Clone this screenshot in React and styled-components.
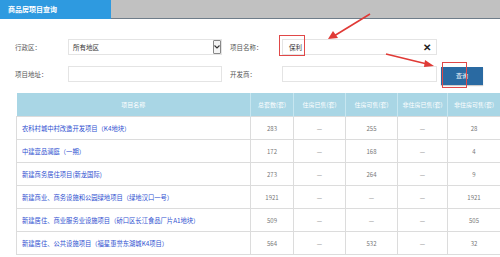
import styled, { createGlobalStyle } from "styled-components";

const rows = [
  ["农科村城中村改造开发项目（K4地块）", "283", "—", "255", "—", "28"],
  ["中建壹品澜庭（一期）", "172", "—", "168", "—", "4"],
  ["新建商务居住项目(新龙国际)", "273", "—", "264", "—", "9"],
  ["新建商业、商务设施和公园绿地项目（绿地汉口一号）", "1921", "—", "—", "—", "1921"],
  ["新建居住、商业服务业设施项目（硚口区长江食品厂片A1地块）", "509", "—", "—", "—", "505"],
  ["新建居住、公共设施项目（福星惠誉东湖城K4项目）", "564", "—", "532", "—", "32"],
];

const heads = ["项目名称", "总套数(套)", "住房已售(套)", "住房可售(套)", "非住房已售(套)", "非住房可售(套)"];
const widths = [234, 43, 52, 52, 50, 53];

function App() {
  return (
    <Page>
      <Global />
      <TopBar>
        <Tab>商品房项目查询</Tab>
      </TopBar>
      <Form>
        <Label>行政区：</Label>
        <Select>
          <span>所有地区</span>
          <Caret>
            <svg width="6" height="4" viewBox="0 0 6 4">
              <path d="M0.5 0.5 L3 3 L5.5 0.5" fill="none" stroke="#333" strokeWidth="1.1" />
            </svg>
          </Caret>
        </Select>
        <Label>项目名称：</Label>
        <Field>
          <span>保利</span>
          <Clear>✕</Clear>
        </Field>
        <span />
        <Label>项目地址：</Label>
        <Field />
        <Label>开发商：</Label>
        <Field />
        <Button>查询</Button>
      </Form>
      <Table>
        <colgroup>
          {widths.map((w, i) => (
            <col key={i} style={{ width: w }} />
          ))}
        </colgroup>
        <thead>
          <tr>
            {heads.map((h) => (
              <Th key={h}>{h}</Th>
            ))}
          </tr>
        </thead>
        <tbody>
          {rows.map((r) => (
            <tr key={r[0]}>
              <NameCell>{r[0]}</NameCell>
              {r.slice(1).map((v, i) => (
                <Td key={i}>{v}</Td>
              ))}
            </tr>
          ))}
        </tbody>
      </Table>
      <Mark $x={279} $y={35} $w={26} $h={21} />
      <Mark $x={442} $y={62} $w={25} $h={26} />
      <Arrows width="500" height="257" viewBox="0 0 500 257">
        <line x1="370" y1="14" x2="334" y2="36" stroke="#e03a36" strokeWidth="1.6" />
        <polygon points="328,39 333,31 338,38" fill="#e03a36" />
        <line x1="386" y1="54" x2="427" y2="64" stroke="#e03a36" strokeWidth="1.6" />
        <polygon points="434,66 425,60 424,67" fill="#e03a36" />
      </Arrows>
    </Page>
  );
}

const Global = createGlobalStyle`
  html, body { margin: 0; padding: 0; background: #fff; overflow: hidden; }
  body { font-family: "Noto Sans CJK SC", "Noto Sans", sans-serif; }
`;

const Page = styled.div`
  position: relative;
  width: 500px;
  height: 257px;
  overflow: hidden;
`;

const TopBar = styled.div`
  display: flex;
  height: 19px;
  background: #c1c1c1;
  box-shadow: inset 0 -1px 0 #6f7d8a;
`;

const Tab = styled.div`
  width: 103px;
  padding-left: 8px;
  background: #2e9ae0;
  color: #fff;
  font-size: 7px;
  font-weight: bold;
  line-height: 19px;
`;

const Form = styled.div`
  display: grid;
  grid-template-columns: 53px 162px 52px 159px 46px;
  grid-template-rows: 16px 16px;
  row-gap: 11px;
  align-items: center;
  padding: 20px 0 0 15px;
  height: 54px;
  box-sizing: border-box;

  & > :nth-child(2),
  & > :nth-child(7) {
    margin-right: 8px;
  }
  & > :nth-child(4),
  & > :nth-child(9) {
    margin-right: 4px;
  }
`;

const Label = styled.div`
  font-size: 6.5px;
  color: #555;
`;

const Field = styled.div`
  display: flex;
  align-items: center;
  justify-content: space-between;
  height: 16px;
  border: 1px solid #e4e4e4;
  box-sizing: border-box;
  padding: 0 5px 0 6px;
  font-size: 6.5px;
  color: #333;
`;

const Select = styled(Field)`
  padding: 0 0 0 4px;
`;

const Caret = styled.div`
  display: flex;
  align-items: center;
  justify-content: center;
  width: 8px;
  height: 14px;
  border: 1px solid #888;
  border-radius: 1px;
  background: #f4f4f4;
  box-sizing: border-box;
`;

const Clear = styled.span`
  font-size: 10px;
  font-weight: bold;
  color: #222;
  line-height: 1;
`;

const Button = styled.div`
  width: 42px;
  height: 18px;
  margin-top: 3px;
  background: #2a6aa2;
  color: #fff;
  font-size: 6px;
  display: flex;
  align-items: center;
  justify-content: center;
  box-shadow: 0 1px 1px rgba(0, 0, 0, 0.2);
`;

const Table = styled.table`
  margin: 20px 0 0 16px;
  border-collapse: collapse;
  table-layout: fixed;
  width: 484px;
  font-size: 6px;
`;

const Th = styled.th`
  height: 23px;
  padding: 0;
  background: #a9d6e5;
  color: #fff;
  font-weight: normal;
  border-right: 1px solid #c7e6f0;
  white-space: nowrap;
  overflow: hidden;
`;

const Td = styled.td`
  height: 22px;
  padding: 0;
  text-align: center;
  color: #777;
  border: 1px solid #dcdcdc;
  white-space: nowrap;
`;

const NameCell = styled(Td)`
  text-align: left;
  padding-left: 5px;
  color: #2e4fd0;
  font-size: 6.3px;
`;

const Mark = styled.div`
  position: absolute;
  left: ${(p) => p.$x}px;
  top: ${(p) => p.$y}px;
  width: ${(p) => p.$w}px;
  height: ${(p) => p.$h}px;
  border: 1px solid #e04848;
  box-sizing: border-box;
`;

const Arrows = styled.svg`
  position: absolute;
  left: 0;
  top: 0;
  pointer-events: none;
`;

export default App;
